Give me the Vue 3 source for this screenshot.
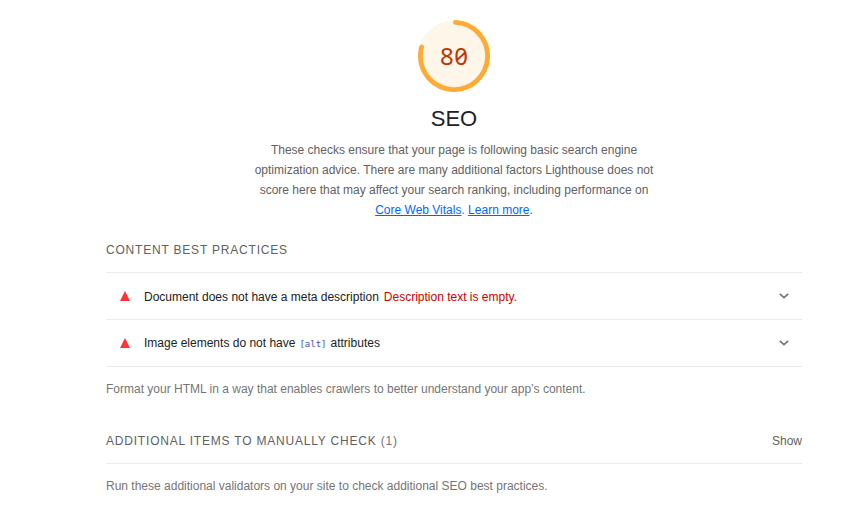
<script setup>
const audits = [
  { title: 'Document does not have a meta description', note: 'Description text is empty.' },
  { title: 'Image elements do not have', code: '[alt]', rest: 'attributes' },
]
</script>

<template>
  <main class="report">
    <header class="category">
      <div class="gauge">
        <svg class="ring" width="72" height="72" viewBox="0 0 72 72">
          <circle cx="36" cy="36" r="35.8" fill="#fff6ea" />
          <circle cx="36" cy="36" r="33.6" fill="none" stroke="#fa3" stroke-width="4.8" stroke-linecap="round"
            stroke-dasharray="165.8 300" transform="rotate(-87.5 36 36)" />
        </svg>
        <span class="score">80</span>
      </div>
      <h1>SEO</h1>
      <p class="intro">
        <span>These checks ensure that your page is following basic search engine</span><br>
        <span>optimization advice. There are many additional factors Lighthouse does not</span><br>
        <span>score here that may affect your search ranking, including performance on</span><br>
        <a>Core Web Vitals</a>. <a>Learn more</a>.
      </p>
    </header>

    <section>
      <h2>CONTENT BEST PRACTICES</h2>
      <ul class="audits">
        <li v-for="audit in audits" :key="audit.title">
          <svg class="fail" width="10" height="10" viewBox="0 0 10 10"><path d="M5 0 10 10H0z" fill="#f33" /></svg>
          <div class="title">
            <span>{{ audit.title }}</span>
            <span v-if="audit.note" class="note">{{ audit.note }}</span>
            <code v-if="audit.code">{{ audit.code }}</code>
            <span v-if="audit.rest">{{ audit.rest }}</span>
          </div>
          <svg class="chevron" width="10" height="6" viewBox="0 0 10 6">
            <path d="M.8.8 5 4.7 9.2.8" fill="none" stroke="#757575" stroke-width="1.7" />
          </svg>
        </li>
      </ul>
      <p class="description">Format your HTML in a way that enables crawlers to better understand your app’s content.</p>
    </section>

    <section class="manual">
      <div class="manual-head">
        <h2>ADDITIONAL ITEMS TO MANUALLY CHECK <span class="count">(1)</span></h2>
        <span class="show">Show</span>
      </div>
      <p class="description">Run these additional validators on your site to check additional SEO best practices.</p>
    </section>
  </main>
</template>

<style>
body { margin: 0; background: #fff; }
</style>

<style scoped>
.report {
  width: 696px;
  height: 528px;
  margin-left: 106px;
  padding-top: 20px;
  box-sizing: border-box;
  font-family: "Liberation Sans", Arial, sans-serif;
  font-size: 12px;
  line-height: 20px;
  color: #212121;
  white-space: nowrap;
}
h1, h2, p, ul { margin: 0; padding: 0; font-weight: 400; }
.category { display: flex; flex-direction: column; align-items: center; height: 220px; }
.gauge { display: grid; place-items: center; width: 72px; height: 72px; }
.gauge > * { grid-area: 1 / 1; }
.score {
  font-family: "Noto Sans", sans-serif;
  font-feature-settings: "zero";
  font-size: 24px;
  line-height: 72px;
  letter-spacing: .6px;
  padding-left: .6px;
  color: #c33300;
}
h1 { margin-top: 13px; font-size: 22px; line-height: 28px; }
.intro { margin-top: 7px; text-align: center; color: #616161; }
a { color: #06f; text-decoration: underline; }
h2 { font-size: 12px; line-height: 20px; letter-spacing: .8px; color: #616161; }
.audits { margin-top: 12px; list-style: none; border-top: 1px solid #ebebeb; }
.audits li {
  display: flex;
  align-items: center;
  height: 46px;
  padding: 0 13px 0 14px;
  border-bottom: 1px solid #ebebeb;
}
.fail { margin-right: 14px; }
.title { display: flex; flex: 1; align-items: baseline; gap: 4px; }
.audits li:first-child .title { padding-top: 2px; }
.note { margin-left: 1px; color: #c00; }
code { font: 9px "DejaVu Sans Mono", monospace; color: #3f51b5; }
.description { padding-top: 12px; color: #757575; }
.manual { margin-top: 32px; }
.manual-head {
  display: flex;
  justify-content: space-between;
  height: 32px;
  border-bottom: 1px solid #ebebeb;
}
.count { color: #757575; }
.show { color: #616161; }
</style>
